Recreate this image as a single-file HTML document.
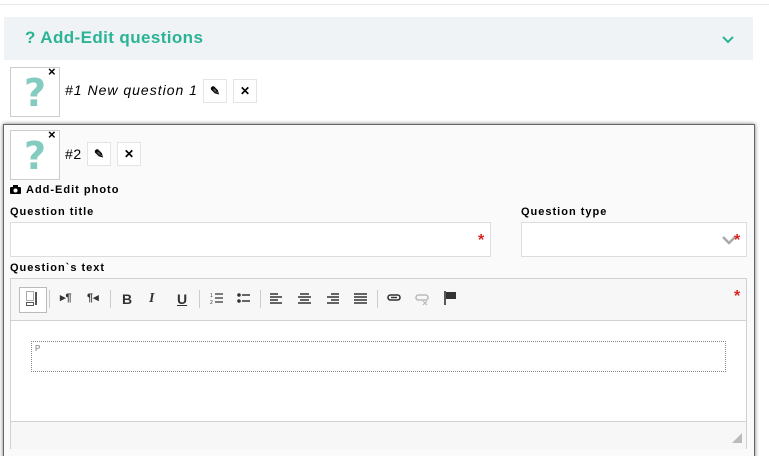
<!DOCTYPE html><html><head><style>
html,body{margin:0;width:769px;height:456px;overflow:hidden}
body{background:#fff;font-family:"Liberation Sans",sans-serif;position:relative}
.a{position:absolute}
.btn{position:absolute;width:22px;height:22px;border:1px solid #e4e4e4;background:#fff;font-size:12px;text-align:center;line-height:22px;font-weight:bold}
.th{position:absolute;width:48px;height:48px;border:1px solid #ccc;background:#fff}
.th span{position:absolute;left:13px;top:6px;font-size:38px;font-weight:bold;color:#84cbc0;line-height:38px;font-family:"DejaVu Sans",sans-serif}
.th i{position:absolute;left:37px;top:-4px;font-style:normal;font-weight:bold;font-size:13px;color:#000}
.lbl{position:absolute;font-size:11px;font-weight:bold;letter-spacing:1px;color:#000}
.inp{position:absolute;border:1px solid #ddd;background:#fff;box-sizing:border-box}
.st{position:absolute;color:#d22;font-size:16px;font-weight:bold}
.tb{position:absolute;top:291px;font-size:13px;color:#333;font-weight:bold}
.sep{position:absolute;top:290px;width:1px;height:18px;background:#ccc}
svg.i{position:absolute;top:292px}
</style></head><body>
<div class="a" style="left:0;top:4px;width:769px;height:1px;background:#e8e8e8"></div>
<div class="a" style="left:4px;top:17px;width:749px;height:43px;background:#f0f3f6"></div>
<div class="a" style="left:25px;top:28px;font-size:17px;font-weight:bold;color:#2bb396;letter-spacing:.4px">? Add-Edit questions</div>
<svg class="a" style="left:722px;top:36px" width="12" height="8"><path d="M1 1l5 5 5-5" stroke="#2bb396" stroke-width="2" fill="none"/></svg>
<div class="th" style="left:10px;top:67px"><span>?</span><i>×</i></div>
<div class="a" style="left:65px;top:82px;font-size:14px;font-style:italic;letter-spacing:1px">#1 New question 1</div>
<div class="btn" style="left:203px;top:79px">✎</div><div class="btn" style="left:233px;top:79px">✕</div>
<div class="a" style="left:3px;top:124px;width:750px;height:340px;border:1px solid #666;background:#fafafa;box-shadow:0 0 4px #777"></div>
<div class="th" style="left:10px;top:130px"><span>?</span><i>×</i></div>
<div class="a" style="left:65px;top:146px;font-size:14px;letter-spacing:.6px">#2</div>
<div class="btn" style="left:87px;top:142px">✎</div><div class="btn" style="left:117px;top:142px">✕</div>
<svg class="a" style="left:10px;top:185px" width="11" height="9"><rect x="0" y="2" width="11" height="7" rx="1" fill="#000"/><rect x="3" y="0" width="5" height="3" fill="#000"/><circle cx="5.5" cy="5.5" r="2" fill="#fff"/></svg>
<div class="lbl" style="left:26px;top:184px">Add-Edit photo</div>
<div class="lbl" style="left:10px;top:206px">Question title</div>
<div class="inp" style="left:10px;top:222px;width:481px;height:35px"></div>
<div class="st" style="left:478px;top:232px">*</div>
<div class="lbl" style="left:521px;top:206px">Question type</div>
<div class="inp" style="left:521px;top:222px;width:226px;height:35px"></div>
<svg class="a" style="left:722px;top:236px" width="14" height="9"><path d="M1 1l6 6 6-6" stroke="#aaa" stroke-width="2.5" fill="none"/></svg>
<div class="st" style="left:734px;top:232px">*</div>
<div class="lbl" style="left:10px;top:262px">Question`s text</div>
<div class="inp" style="left:10px;top:278px;width:737px;height:171px;border-color:#d1d1d1"></div>
<div class="a" style="left:11px;top:279px;width:735px;height:41px;background:#f7f7f7;border-bottom:1px solid #d1d1d1"></div>
<div class="a" style="left:19px;top:287px;width:26px;height:24px;border:1px solid #bbb;background:#fff"></div>
<svg class="a" style="left:26px;top:291px" width="12" height="16"><rect x="0.5" y="0.5" width="7" height="9" fill="none" stroke="#555" stroke-dasharray="1 1"/><rect x="0.5" y="11.5" width="7" height="3" fill="none" stroke="#555"/><rect x="9" y="1" width="2" height="13" fill="#555"/></svg>
<div class="sep" style="left:49px"></div>
<div class="tb" style="left:60px;font-size:11px">▸¶</div><div class="tb" style="left:87px;font-size:11px">¶◂</div>
<div class="sep" style="left:110px"></div>
<div class="tb" style="left:122px;font-size:14px">B</div><div class="tb" style="left:149px;font-size:14px;font-style:italic;font-family:'Liberation Serif',serif">I</div><div class="tb" style="left:177px;font-size:14px;text-decoration:underline">U</div>
<div class="sep" style="left:199px"></div>
<svg class="i" style="left:210px" width="13" height="12"><path d="M5 2h8M5 6h8M5 10h8" stroke="#333" stroke-width="1.3"/><text x="0" y="5" font-size="5" fill="#333">1</text><text x="0" y="12" font-size="5" fill="#333">2</text></svg>
<svg class="i" style="left:237px" width="13" height="12"><path d="M5 3h8M5 9h8" stroke="#333" stroke-width="1.5"/><circle cx="2" cy="3" r="1.8" fill="#333"/><circle cx="2" cy="9" r="1.8" fill="#333"/></svg>
<div class="sep" style="left:260px"></div>
<svg class="i" style="left:270px" width="13" height="12"><path d="M0 2h8M0 5h12M0 8h8M0 11h12" stroke="#333" stroke-width="1.5"/></svg>
<svg class="i" style="left:298px" width="13" height="12"><path d="M2 2h9M0 5h13M2 8h9M0 11h13" stroke="#333" stroke-width="1.5"/></svg>
<svg class="i" style="left:326px" width="13" height="12"><path d="M5 2h8M1 5h12M5 8h8M1 11h12" stroke="#333" stroke-width="1.5"/></svg>
<svg class="i" style="left:354px" width="13" height="12"><path d="M0 2h13M0 5h13M0 8h13M0 11h13" stroke="#333" stroke-width="1.5"/></svg>
<div class="sep" style="left:377px"></div>
<svg class="i" style="left:387px" width="14" height="12"><rect x="1" y="3" width="12" height="5" rx="2.5" fill="none" stroke="#333" stroke-width="1.6"/><path d="M4 5.5h6" stroke="#333" stroke-width="1.4"/></svg>
<svg class="i" style="left:415px" width="14" height="14"><rect x="1" y="3" width="12" height="5" rx="2.5" fill="none" stroke="#bbb" stroke-width="1.6"/><path d="M8 9l4 4M12 9l-4 4" stroke="#bbb" stroke-width="1.2"/></svg>
<svg class="i" style="left:444px;top:291px" width="13" height="14"><path d="M1 0v14" stroke="#333" stroke-width="1.6"/><path d="M2 1h10v7H2z" fill="#333"/></svg>
<div class="st" style="left:734px;top:288px">*</div>
<div class="a" style="left:31px;top:341px;width:693px;height:29px;border:1px dotted #888"></div>
<div class="a" style="left:35px;top:344px;font-size:8px;color:#777">P</div>
<div class="a" style="left:11px;top:421px;width:735px;height:27px;background:#f7f7f7;border-top:1px solid #d1d1d1"></div>
<svg class="a" style="left:732px;top:433px" width="10" height="10"><path d="M10 0V10H0z" fill="#bbb"/></svg>
</body></html>
